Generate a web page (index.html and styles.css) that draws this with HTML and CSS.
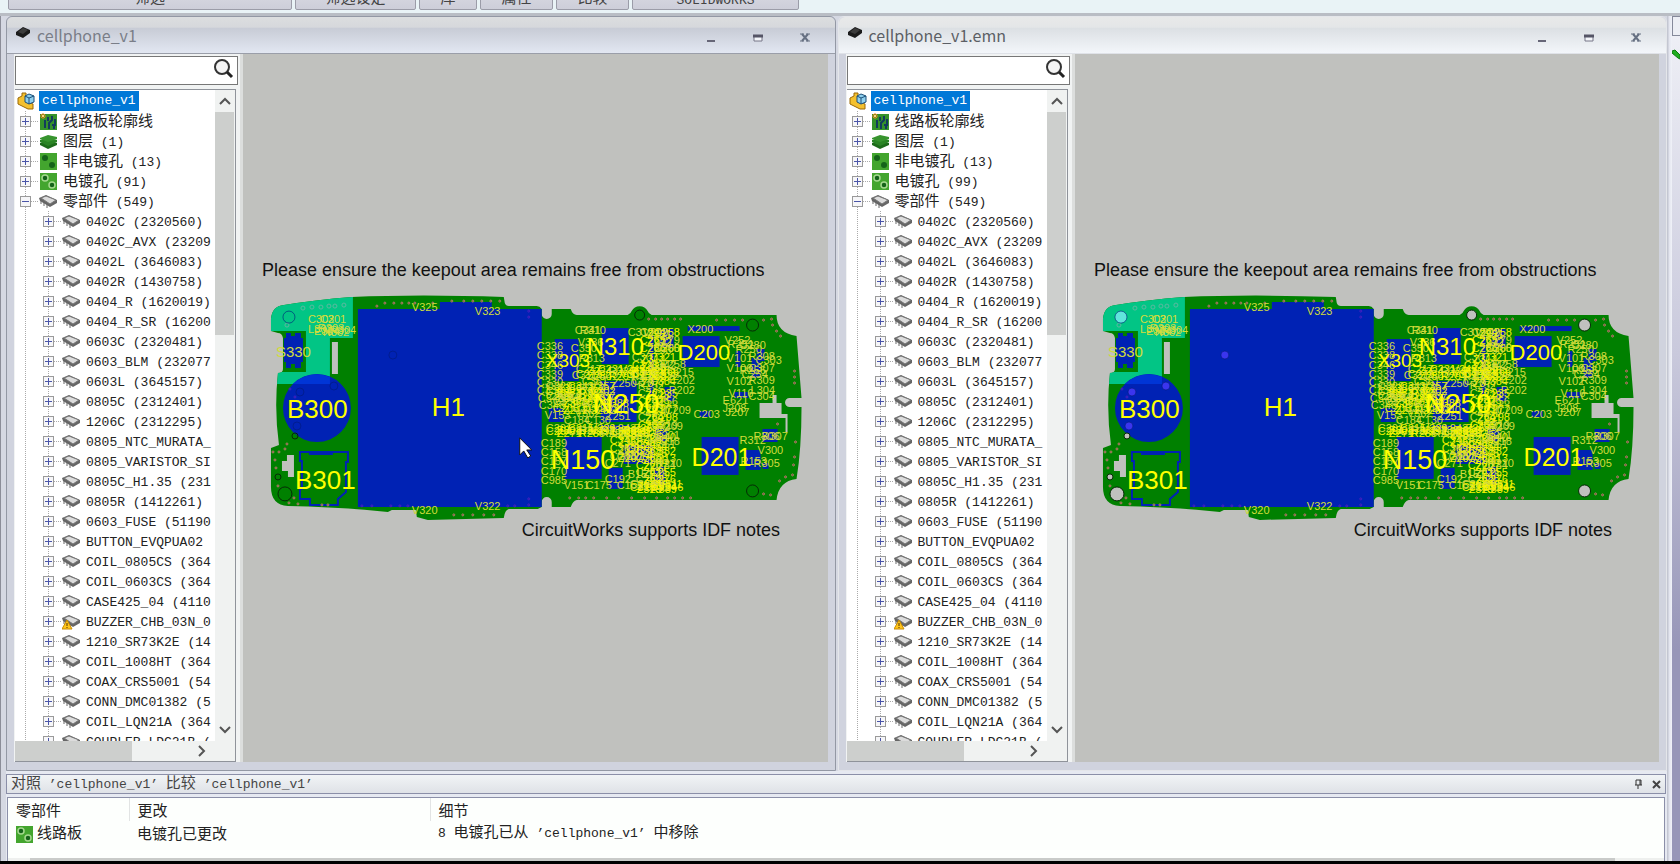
FILE: index.html
```html
<!DOCTYPE html>
<html lang="zh-CN">
<head>
    <meta charset="UTF-8">
    <meta name="viewport" content="width=device-width, initial-scale=1.0">
    <title>CircuitWorks</title>
    <link rel="stylesheet" href="styles.css">
</head>
<body>

<svg width="0" height="0" class="defs">
    <symbol id="chip" viewBox="0 0 19 15">
        <path d="M0 4 L7 1 L18 6 L18 9 L11 13 L1 7 Z" fill="#666"/>
        <path d="M2 4 L7 2 L17 6 L11 10 Z" fill="#dcdcdc" stroke="#777" stroke-width="1"/>
        <path d="M2 6 V10 M5 8 V12 M8 10 V14" stroke="#666" stroke-width="1"/>
    </symbol>
    <symbol id="warn" viewBox="0 0 19 15">
        <use href="#chip"/>
        <path d="M5 6 L10 15 H0 Z" fill="#ffc61a" stroke="#c98a00" stroke-width="1"/>
        <path d="M5 9 V12 M5 13 V14" stroke="#553300" stroke-width="1"/>
    </symbol>
    <symbol id="outline" viewBox="0 0 17 17">
        <rect y="1" width="17" height="16" fill="#35922a"/>
        <path d="M5 7 V15 M9 16 V10 L12 7 V3 M12 12 H15 V6 M14 16 V13 M8 4 V8" stroke="#123c5c" stroke-width="2" fill="none"/>
        <path d="M3 0 V6 M0 3 H6 M1 1 L5 5 M5 1 L1 5" stroke="#e58a1c" stroke-width="1"/>
        <circle cx="3" cy="3" r="1" fill="#ffe9a0"/>
    </symbol>
    <symbol id="layers" viewBox="0 0 17 17">
        <path d="M0 10 L8 8 L17 10 V12 L8 16 L0 12 Z" fill="#1d6b1a"/>
        <path d="M0 7 L8 5 L17 7 V9 L8 13 L0 9 Z" fill="#2a8424"/>
        <path d="M0 5 L8 2 L17 4 V6 L8 9 L0 6 Z" fill="#37942e"/>
    </symbol>
    <symbol id="holes" viewBox="0 0 17 17">
        <rect width="17" height="17" fill="#43a52e"/>
        <circle cx="5" cy="5" r="3" fill="#15631a"/>
        <circle cx="12" cy="12" r="3" fill="#15631a"/>
    </symbol>
    <symbol id="plated" viewBox="0 0 17 17">
        <rect width="17" height="17" fill="#43a52e"/>
        <circle cx="5" cy="5" r="3" fill="#15631a" stroke="#a4d88e" stroke-width="1.5"/>
        <circle cx="12" cy="12" r="3" fill="#15631a" stroke="#a4d88e" stroke-width="1.5"/>
    </symbol>
    <symbol id="assembly" viewBox="0 0 18 18">
        <path d="M1 6 L5 4 V1 L9 1 V9 L16 12 V17 L11 17 L1 12 Z" fill="#f3c02f" stroke="#9a6808" stroke-width="1"/>
        <path d="M8 4 L12 2 L17 4 V10 L12 12 L8 10 Z" fill="#8fd0ee" stroke="#1c4f78" stroke-width="1"/>
        <path d="M8 4 L12 6 L17 4 M12 6 V12" stroke="#1c4f78" fill="none"/>
    </symbol>
    <symbol id="doc" viewBox="0 0 14 13">
        <path d="M0 6 L7 1 L14 4 V7 L7 12 L0 9 Z" fill="#1b1b1b"/>
        <path d="M2 6 L7 2 L12 4 L7 8 Z" fill="#3c3c3c"/>
    </symbol>
</svg>

<div class="ribbon">
    <div class="group g1">筛选</div>
    <div class="group g2">筛选设定</div>
    <div class="group g3">库</div>
    <div class="group g4">属性</div>
    <div class="group g4">比较</div>
    <div class="group g5">SOLIDWORKS</div>
</div>

<div class="main">
    <div class="workspace">
        <div class="windows" id="windows"></div>

        <section class="results">
            <header class="results-bar">
                <h2><span class="cjk">对照</span> ’cellphone_v1’ <span class="cjk">比较</span> ’cellphone_v1’</h2>
                <button aria-label="固定"><svg width="9" height="11"><path d="M1 6 H8 M2 6 V1 H7 V6 M6 1 V6 M4 6 V10" stroke="#333" fill="none"/></svg></button>
                <button aria-label="关闭"><svg width="9" height="9"><path d="M1 1 L8 8 M8 1 L1 8" stroke="#444" stroke-width="2"/></svg></button>
            </header>
            <div class="results-body">
                <table>
                    <thead>
                        <tr><th class="c1">零部件</th><th class="c2">更改</th><th>细节</th></tr>
                    </thead>
                    <tbody>
                        <tr>
                            <td><svg width="17" height="17"><use href="#plated"/></svg>线路板</td>
                            <td>电镀孔已更改</td>
                            <td><span class="mono">8 </span>电镀孔已从<span class="mono"> ’cellphone_v1’ </span>中移除</td>
                        </tr>
                    </tbody>
                </table>
                <div class="results-scroll"><div></div></div>
            </div>
        </section>
    </div>
    <aside class="side">
        <div class="side-tab"></div>
        <svg width="8" height="12"><path d="M0 2 L3 1 L8 6 V10 L6 9 L0 4 Z" fill="#1fae1f" stroke="#0c7a0c"/></svg>
    </aside>
</div>
<footer class="edge"></footer>

<script src="board.js"></script>
</body>
</html>
```
FILE: board.js
```js
const groups = [
    ["outline", "线路板轮廓线", ""],
    ["layers", "图层", " (1)"],
    ["holes", "非电镀孔", " (13)"],
    ["plated", "电镀孔", ""],
    ["chip", "零部件", " (549)"]
];

const parts = [
    "0402C (2320560)", "0402C_AVX (23209", "0402L (3646083)", "0402R (1430758)",
    "0404_R (1620019)", "0404_R_SR (16200", "0603C (2320481)", "0603_BLM (232077",
    "0603L (3645157)", "0805C (2312401)", "1206C (2312295)", "0805_NTC_MURATA_",
    "0805_VARISTOR_SI", "0805C_H1.35 (231", "0805R (1412261)", "0603_FUSE (51190",
    "BUTTON_EVQPUA02", "COIL_0805CS (364", "COIL_0603CS (364", "CASE425_04 (4110",
    "BUZZER_CHB_03N_0", "1210_SR73K2E (14", "COIL_1008HT (364", "COAX_CRS5001 (54",
    "CONN_DMC01382 (5", "COIL_LQN21A (364", "COUPLER_LDC21B ("
];

// [text, x, y, size]
const bigLabels = [
    ["H1", 432, 417, 26], ["B300", 287, 419, 26], ["B301", 295, 490, 26],
    ["N310", 587, 356, 24], ["N250", 593, 414, 28], ["N150", 551, 470, 27],
    ["D200", 678, 361, 22], ["D201", 692, 467, 25], ["X303", 546, 368, 19]
];

const labels = [
    ["V325", 412, 312], ["V323", 475, 316], ["V320", 412, 515], ["V322", 475, 511],
    ["C302", 308, 324], ["C301", 320, 324], ["L302", 308, 334], ["R303", 318, 333],
    ["E304", 314, 336], ["R304", 330, 335], ["N302", 323, 337],
    ["C336", 537, 351], ["C338", 537, 360], ["C346", 537, 370], ["C339", 537, 379],
    ["C330", 537, 387], ["C332", 537, 395], ["C340", 538, 403], ["C348", 539, 410],
    ["V153", 545, 420], ["C189", 541, 448], ["C158", 541, 457], ["C157", 541, 466],
    ["C170", 541, 476], ["C985", 541, 485], ["V151", 564, 490], ["C175", 586, 490],
    ["C192", 605, 484], ["B151", 628, 479], ["C155", 617, 490],
    ["C341", 575, 335], ["R310", 580, 335], ["V336", 578, 347], ["C319", 628, 337],
    ["V249", 643, 337], ["C350", 571, 353], ["R313", 579, 363], ["C311", 572, 380],
    ["C361", 582, 386], ["Z250", 612, 388], ["Z251", 606, 421], ["R252", 638, 390],
    ["C184", 564, 425], ["C130", 585, 425], ["V362", 575, 418], ["V340", 560, 402],
    ["C255", 654, 353], ["R258", 660, 369], ["C215", 668, 377], ["C202", 669, 385],
    ["R202", 669, 395], ["C209", 665, 415], ["R209", 657, 431], ["C201", 654, 440],
    ["C218", 654, 446], ["R210", 656, 468], ["G151", 617, 461], ["C271", 605, 468],
    ["X200", 688, 334], ["V252", 725, 345], ["V101", 727, 363], ["V106", 727, 373],
    ["V102", 727, 386], ["V116", 729, 398], ["R308", 749, 361], ["C303", 756, 365],
    ["C307", 749, 373], ["R309", 749, 385], ["L304", 751, 395], ["C304", 749, 401],
    ["R251", 728, 349], ["C280", 740, 350], ["R250", 736, 354], ["C254", 742, 379],
    ["R256", 740, 375], ["E621", 723, 405], ["J208", 723, 413], ["J207", 726, 417],
    ["C203", 694, 419], ["R312", 740, 445], ["R306", 754, 441], ["R307", 762, 441],
    ["V300", 758, 455], ["R153", 741, 466], ["R305", 754, 468]
];

// columns and rows of tiny parts packed so close that their names overlap
// [x, y, columns, rows, dx, dy]
const dense = [
    [576, 374, 8, 2, 11, 5], [546, 391, 5, 3, 11, 5], [640, 337, 3, 3, 7, 8],
    [632, 362, 3, 4, 9, 8], [546, 433, 9, 2, 11, 3], [610, 437, 3, 4, 8, 8],
    [638, 398, 3, 5, 7, 8], [636, 442, 3, 7, 7, 7], [630, 489, 5, 2, 7, 3],
    [553, 406, 6, 2, 10, 7]
];

const blocks = [
    [555, 340, 24, 42], [602, 329, 27, 36], [601, 382, 36, 41], [565, 438, 37, 42],
    [683, 337, 37, 31], [702, 438, 37, 38], [688, 327, 52, 5], [746, 451, 15, 20],
    [763, 430, 15, 13], [609, 469, 14, 21], [624, 446, 30, 19], [660, 330, 14, 18],
    [665, 388, 10, 14], [549, 409, 15, 14], [736, 352, 5, 16], [757, 350, 8, 12],
    [752, 359, 9, 20], [735, 393, 14, 6], [700, 412, 11, 6], [656, 430, 12, 12],
    [763, 464, 6, 6], [650, 337, 4, 60], [600, 426, 30, 4], [655, 468, 10, 18]
];

const vias = [
    [385, 304], [394, 304], [402, 304], [409, 304], [415, 304], [433, 304], [377, 307],
    [452, 302], [464, 302], [473, 302], [482, 302], [491, 302], [500, 302],
    [649, 320], [656, 320], [662, 320], [668, 320], [675, 320], [681, 320],
    [717, 321], [726, 321], [735, 321], [743, 321], [764, 321], [772, 320], [773, 326], [777, 332], [781, 337],
    [795, 372], [795, 378], [795, 384], [778, 425], [796, 443], [795, 458], [794, 466],
    [793, 476], [786, 478], [780, 482], [764, 495], [771, 496],
    [570, 499], [579, 499], [586, 499], [594, 499], [607, 499], [619, 499], [632, 499],
    [645, 499], [657, 499], [668, 499], [675, 499], [683, 499], [691, 499],
    [454, 516], [463, 516], [473, 516], [484, 516], [494, 516],
    [273, 453], [279, 453], [285, 450], [287, 445], [275, 461], [276, 469], [278, 487],
    [294, 499], [289, 504], [298, 505], [322, 506], [328, 506]
];

const tealVias = [[303, 309], [312, 308], [321, 308], [329, 307], [335, 307], [344, 306], [287, 326]];
const blueVias = [
    [529, 312], [529, 318], [362, 507], [372, 507], [391, 507], [400, 507], [408, 507],
    [508, 507], [515, 507], [529, 500], [529, 506], [290, 390], [295, 398]
];

// holes that were removed in the left revision and are drilled in the right one
const holes = [
    [289, 318, 6, "#60e5dc"], [393, 356, 4, "#3b35ee"], [334, 387, 4, "#3b35ee"],
    [300, 393, 4, "#3b35ee"], [297, 427, 4, "#3b35ee"], [295, 437, 3, "#c0c1be"],
    [278, 478, 3, "#c0c1be"], [285, 495, 7, "#c0c1be"], [640, 316, 5, "#c0c1be"],
    [753, 326, 6, "#c0c1be"], [753, 492, 6, "#c0c1be"]
];

function text(t, x, y, size, cls) {
    return `<text x="${x}" y="${y}" font-size="${size}" class="${cls}">${t}</text>`;
}

function dots(list, r, cls) {
    return list.map(([x, y]) => `<circle cx="${x}" cy="${y}" r="${r}" class="${cls}"/>`).join("");
}

function denseLabels() {
    const letters = ["C", "R", "V", "R", "L", "C", "Z"];
    let out = "";
    let n = 200;
    dense.forEach(([x, y, cols, rows, dx, dy]) => {
        for (let r = 0; r < rows; r++) {
            for (let c = 0; c < cols; c++) {
                n += 7;
                const cls = (r + c) % 3 ? "name bright" : "name";
                out += text(letters[(n * 3 + c) % 7] + (200 + n % 190), x + c * dx, y + r * dy + (c % 2) * 2, 11, cls);
            }
        }
    });
    return out;
}

function board(drilled, id) {
    const outline = "M271 332 V320 Q272 307 284 306 Q315 301 352 298 Q420 295 504 298 L505 304 Q506 307 509 307 H537 Q540 307 542 310 V315 A5 5 0 0 0 552 315 V310 H571 Q573 316 577 316 H628 Q631 315 632 312 A9 9 0 0 1 648 312 Q649 315 652 316 H777 Q777 334 797 337 L802 399 H790 A4 4 0 0 0 790 408 H802 Q802 450 797 480 Q779 482 777 501 H577 Q573 502 571 508 H552 V503 A5 5 0 0 0 542 503 V508 L538 510 H509 Q505 511 504 519 L428 521 L417 518 L416 511 H392 L388 513 Q340 508 288 507 Q271 506 271 488 V449 L279 446 Q274 410 278 374 Q283 374 283 370 V339 Q282 334 278 334 Z";
    const fills = holes.map(([x, y, r, fill]) =>
        `<circle cx="${x}" cy="${y}" r="${r}" fill="${drilled ? fill : "none"}" class="hole${fill === "#c0c1be" ? "" : " faint"}"/>`).join("");

    return `<svg class="board" viewBox="243 55 585 708" role="img" aria-label="cellphone_v1">
        <clipPath id="clip${id}"><path d="${outline}"/></clipPath>
        <path d="${outline}" fill="#008000"/>
        <g clip-path="url(#clip${id})">
            <path d="M268 290 H353 V339 H330 V385 H268 V373 H306 V332 H268 Z" fill="#02c585"/>
        </g>
        <path d="M332 343 H338 V375 H332 Z M287 456 H294 V478 H288 V472 H282 V462 H287 Z M760 404 H773 V396 H777 V404 H782 V415 H788 V433 H786 V419 H760 Z" fill="#c0c1be"/>
        <path d="M286 334 H291 V337 H295 V334 H301 V339 H303 V363 H301 V369 H295 V365 H291 V369 H286 V363 H284 V339 H286 Z" class="part"/>
        <circle cx="317" cy="409" r="34" class="part"/>
        <path d="M293 385 A34 34 0 0 1 330 378 V385 Z" fill="#0035d6"/>
        <path d="M358 310 H440 V303 H492 V310 H542 V508 H358 Z" class="part"/>
        <path d="M300 453 H348 V463 H346 V493 L338 500 V506 H310 V500 H300 V490 H302 V462 H300 Z M310 453 V455 H332 V453" fill="none" stroke="#0022b4" stroke-width="2"/>
        ${blocks.map(([x, y, w, h]) => `<rect x="${x}" y="${y}" width="${w}" height="${h}" class="part"/>`).join("")}
        ${dots(vias, 1, "via")}${dots(tealVias, 2, "via teal")}${dots(blueVias, 1, "via blue")}
        ${fills}
        ${denseLabels()}
        ${labels.map(([t, x, y]) => text(t, x, y, 11, "name")).join("")}
        ${text("S330", 276, 358, 15, "name")}
        ${bigLabels.map(([t, x, y, s]) => text(t, x, y, s, "big")).join("")}
        ${text("Please ensure the keepout area remains free from obstructions", 262, 277, 18, "note")}
        ${text("CircuitWorks supports IDF notes", 522, 537, 18, "note")}
        ${drilled ? "" : '<path d="M520 439 V456 L524 452 L528 459 L531 457 L527 451 H532 Z" fill="#fff" stroke="#111" stroke-width="1"/>'}
    </svg>`;
}

function treeRow(icon, cjk, latin, open) {
    return `<div class="row"><button class="expander" aria-label="${open ? "折叠" : "展开"}">
        <svg width="9" height="9"><path d="${open ? "M1 4.5 H8" : "M1 4.5 H8 M4.5 1 V8"}" stroke="#4a55a8"/></svg></button><i></i>
        <svg class="icon" width="19" height="17"><use href="#${icon}"/></svg><span class="label"><span class="cjk">${cjk}</span>${latin}</span></div>`;
}

function windowHtml(title, plated, drilled, id) {
    const top = groups.map(([icon, cjk, latin]) => {
        const open = cjk === "零部件";
        const count = cjk === "电镀孔" ? ` (${plated})` : latin;
        const kids = open
            ? "<ul class='parts'>" + parts.map(p => `<li>${treeRow(p.startsWith("BUZZER") ? "warn" : "chip", "", p, false)}</li>`).join("") + "</ul>"
            : "";
        return `<li>${treeRow(icon, cjk, count, open)}${kids}</li>`;
    }).join("");

    return `<section class="window ${drilled ? "inactive" : ""}">
        <header class="title">
            <svg width="14" height="13"><use href="#doc"/></svg>
            <h1>${title}</h1>
            <button aria-label="最小化"><svg width="10" height="11"><path d="M1 9 H9" stroke="#667" stroke-width="2"/></svg></button>
            <button aria-label="最大化"><svg width="10" height="11"><path d="M1 4 H9 V9 H1 Z" fill="#f4f6fa" stroke="#778"/><path d="M0 4 H10" stroke="#556" stroke-width="3"/></svg></button>
            <button aria-label="关闭"><svg width="10" height="11"><path d="M2 2 L8 9 M8 2 L2 9" stroke="#667082" stroke-width="2"/><path d="M0 2 H4 M6 2 H10 M0 9 H4 M6 9 H10" stroke="#667082"/></svg></button>
        </header>
        <div class="content">
            <div class="panel">
                <div class="search">
                    <input type="text" aria-label="搜索">
                    <button aria-label="搜索"><svg width="20" height="20"><circle cx="8" cy="8" r="7" fill="#f4f4f4" stroke="#333" stroke-width="2"/><path d="M13 13 L18 18" stroke="#222" stroke-width="3"/></svg></button>
                </div>
                <div class="tree-box">
                    <div class="tree">
                        <div class="root"><svg width="18" height="18"><use href="#assembly"/></svg><span>cellphone_v1</span></div>
                        <ul class="groups">${top}</ul>
                    </div>
                    <div class="vscroll">
                        <button aria-label="向上"><svg width="12" height="8"><path d="M1 7 L6 2 L11 7" class="arrow"/></svg></button>
                        <div class="thumb"></div>
                        <button aria-label="向下"><svg width="12" height="8"><path d="M1 1 L6 6 L11 1" class="arrow"/></svg></button>
                    </div>
                    <div class="hscroll">
                        <div class="thumb"></div>
                        <button aria-label="向右"><svg width="8" height="12"><path d="M1 1 L6 6 L1 11" class="arrow"/></svg></button>
                    </div>
                </div>
            </div>
            <div class="canvas">${board(drilled, id)}</div>
        </div>
    </section>`;
}

document.getElementById("windows").innerHTML =
    windowHtml("cellphone_v1", 91, false, 1) + windowHtml("cellphone_v1.emn", 99, true, 2);
```
FILE: styles.css
```css
* { box-sizing: border-box; }
body { margin: 0; height: 100vh; display: flex; flex-direction: column; overflow: hidden; background: #d5d8e2; color: #222; font: 13px/20px "Liberation Mono", "Noto Sans CJK SC", monospace; }
button { border: none; background: none; padding: 0; display: flex; align-items: center; justify-content: center; }
h1, h2, ul { margin: 0; padding: 0; font-weight: normal; list-style: none; }
.defs { position: absolute; }
.cjk { font: 15px/20px "Noto Sans CJK SC", sans-serif; }
.mono { font: 13px/20px "Liberation Mono", monospace; }

/* ribbon */
.ribbon { flex: none; height: 16px; padding: 0 0 3px 8px; display: flex; align-items: flex-end; gap: 3px; overflow: hidden; background: #e9f3f6; border-bottom: 3px solid #b9bdc4; }
.group { height: 26px; text-align: center; line-height: 30px; background: linear-gradient(#dcdde6, #cdced9); border: 1px solid #9b9ca8; border-radius: 2px; color: #444; }
.g1 { width: 284px; font-size: 15px; }
.g2 { width: 121px; font-size: 15px; }
.g3 { width: 58px; font-size: 15px; }
.g4 { width: 73px; font-size: 15px; }
.g5 { width: 167px; line-height: 32px; }

/* main area */
.main { flex: 1; min-height: 0; display: flex; }
.workspace { flex: 1; min-width: 0; display: flex; flex-direction: column; padding-left: 5px; border-left: 1px solid #8b8d98; }
.windows { flex: 1; min-height: 0; display: flex; gap: 2px; }
.window { flex: 1; min-width: 0; display: flex; flex-direction: column; padding-bottom: 8px; background: #d0d3de; border: 1px solid #9398a4; border-radius: 6px 6px 0 0; }
.inactive { border-color: #e4e6ea; }
.title { flex: none; height: 37px; padding: 0 20px 0 9px; display: flex; align-items: center; background: linear-gradient(#dcdedf, #d6d8dc 28%, #c8ccd6 32%, #e2e7f2); border-bottom: 1px solid #9a9ea9; border-radius: 6px 6px 0 0; }
.inactive .title { background: linear-gradient(#e8e9e9, #e4e6e8 28%, #dce0e4 32%, #f3f6fa); border-bottom-color: #dfe2e8; }
.title > svg { margin-bottom: 5px; }
.title h1 { flex: 1; margin-left: 7px; font: 16px/20px "Noto Sans CJK SC", sans-serif; color: #7a7e88; }
.inactive h1 { color: #5c5f65; }
.title button { width: 20px; height: 20px; margin: 5px 0 0 27px; }
.content { flex: 1; min-height: 0; display: flex; padding: 0 7px; }

/* tree panel */
.panel { flex: none; width: 229px; padding: 2px 4px 0 1px; display: flex; flex-direction: column; gap: 4px; background: #f1f3f3; border-right: 3px solid #dcdedd; }
.search { flex: none; height: 29px; margin-right: -2px; display: flex; background: #fff; border: 1px solid #777; }
.search input { flex: 1; min-width: 0; border: none; background: none; outline: none; padding: 0 6px; font: inherit; }
.search button { width: 22px; height: 24px; margin-right: 2px; }
.tree-box { flex: 1; min-height: 0; display: grid; grid-template: 1fr 20px / 1fr 20px; background: #f0f2f1; border: solid #8f939a; border-width: 1px 1px 1px 0; }
.tree { overflow: hidden; min-width: 0; padding-top: 1px; background: #fff; }
.root { display: flex; align-items: center; height: 20px; padding-left: 2px; gap: 4px; }
.root span { padding: 0 3px; background: #0078d7; color: #fff; }
.groups { background: linear-gradient(#aaa 50%, transparent 50%) 10px 0 / 1px 2px repeat-y; }
.groups .row { padding-left: 5px; }
.parts { background: linear-gradient(#aaa 50%, transparent 50%) 33px 0 / 1px 2px repeat-y; }
.parts .row { padding-left: 28px; }
.row { display: flex; align-items: center; height: 20px; }
.label { margin-left: 5px; white-space: pre; }
.row i { flex: none; width: 7px; margin-right: 1px; border-top: 1px dotted #aaa; }
.row .icon { flex: none; }
.expander { flex: none; width: 11px; height: 11px; background: #f6f6f8; border: 1px solid #9a9a9a; }
.vscroll { display: flex; flex-direction: column; }
.vscroll button { height: 22px; }
.vscroll .thumb { width: 19px; height: 223px; margin-bottom: auto; background: #cdcfcd; }
.hscroll { grid-column: 1 / 3; display: flex; justify-content: space-between; padding-right: 24px; }
.hscroll .thumb { width: 117px; background: #cdcfcd; }
.hscroll button { width: 18px; }
.arrow { fill: none; stroke: #555; stroke-width: 2; }

/* board drawing */
.canvas { flex: 1; min-width: 0; background: #c0c1be; }
.board { display: block; width: 100%; height: 100%; font-family: "Liberation Sans", Arial, sans-serif; }
.part { fill: #0022b4; }
.via { fill: #5a3c28; stroke: #b08468; stroke-width: 1; }
.teal { fill: none; stroke: #5cb8a0; }
.blue { fill: none; stroke: #4a1fc0; }
.hole { stroke: #062806; stroke-width: 1; }
.faint { stroke: #001a78; stroke-opacity: 0.6; }
.name { fill: #d2dc3c; }
.bright { fill: #f4f400; }
.big { fill: #ffff00; }
.note { fill: #111; }

/* comparison results */
.results { flex: none; padding: 3px 1px 0 0; background: #e6e9f1; }
.results-bar { height: 20px; display: flex; align-items: center; padding: 0 4px; background: linear-gradient(#f1f4f6, #dfe2e7); border: 1px solid #8b8fa8; }
.results-bar h2 { flex: 1; margin-bottom: 4px; font-size: 13px; line-height: 16px; color: #444; white-space: pre; }
.results-bar button { width: 10px; margin-left: 8px; }
.results-body { margin: 3px 1px 0; height: 64px; display: flex; flex-direction: column; background: #fdfffd; border: solid #8b8fa8; border-width: 1px 1px 0; }
table { width: 100%; border-collapse: collapse; table-layout: fixed; font: 15px/20px "Noto Sans CJK SC", sans-serif; }
th, td { height: 23px; padding: 0 0 0 8px; text-align: left; font-weight: normal; white-space: pre; }
th + th { border-left: 1px solid #e2e4e4; }
.c1 { width: 121px; }
.c2 { width: 301px; }
td svg { vertical-align: middle; margin-right: 4px; }
.results-scroll { margin-top: auto; height: 3px; padding-left: 22px; background: #eef0ee; }
.results-scroll div { width: 97%; height: 3px; background: #c9cbc9; }

/* right dock */
.side { flex: none; width: 13px; padding-left: 5px; background: linear-gradient(90deg, #c4c7d2 1px, #e2e4ee 2px, #f0f2f8 5px, transparent 5px), linear-gradient(#f0f1f7, #c9c9dc 40%, #9796b8 75%); }
.side-tab { height: 20px; margin-bottom: 12px; background: #eceef4; border: solid #85899a; border-width: 1px 0 1px 1px; }
.edge { flex: none; height: 3px; background: #000; }
```
